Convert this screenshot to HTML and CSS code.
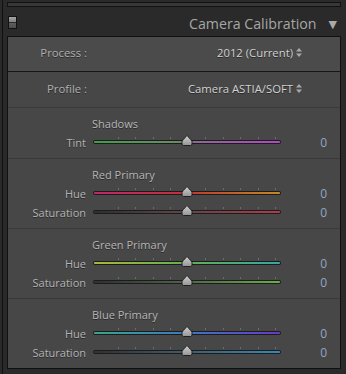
FILE: index.html
```html
<!DOCTYPE html>
<html lang="en">
<head>
<meta charset="UTF-8" />
<meta name="viewport" content="width=device-width, initial-scale=1" />
<title>Camera Calibration</title>
<link rel="stylesheet" href="styles.css">
</head>
<body>
<div class="wrap">
  <div class="strip"></div>

  <div class="panel-head">
    <span class="switch"></span>
    <span class="title">Camera Calibration</span>
    <span class="arrow">&#9660;</span>
  </div>

  <div class="panel">
    <div class="select-row process">
      <span class="label">Process :</span>
      <span class="select">2012 (Current)
        <svg class="updown" width="6" height="9" viewBox="0 0 6 9"><path d="M3 0 L6 3.5 L0 3.5 Z M0 5.5 L6 5.5 L3 9 Z" fill="#a9a9a9"/></svg>
      </span>
    </div>
    <div class="select-row profile">
      <span class="label">Profile :</span>
      <span class="select">Camera ASTIA/SOFT
        <svg class="updown" width="6" height="9" viewBox="0 0 6 9"><path d="M3 0 L6 3.5 L0 3.5 Z M0 5.5 L6 5.5 L3 9 Z" fill="#a9a9a9"/></svg>
      </span>
    </div>

    <div class="group">
      <div class="group-title">Shadows</div>
      <div class="slider-row">
        <span class="label">Tint</span>
        <div class="slider"><div class="ticks"></div><div class="track tint"></div><span class="thumb"></span></div>
        <span class="num">0</span>
      </div>
    </div>

    <div class="group">
      <div class="group-title">Red Primary</div>
      <div class="slider-row">
        <span class="label">Hue</span>
        <div class="slider"><div class="ticks"></div><div class="track red-hue"></div><span class="thumb"></span></div>
        <span class="num">0</span>
      </div>
      <div class="slider-row">
        <span class="label">Saturation</span>
        <div class="slider"><div class="ticks"></div><div class="track red-sat"></div><span class="thumb"></span></div>
        <span class="num">0</span>
      </div>
    </div>

    <div class="group">
      <div class="group-title">Green Primary</div>
      <div class="slider-row">
        <span class="label">Hue</span>
        <div class="slider"><div class="ticks"></div><div class="track green-hue"></div><span class="thumb"></span></div>
        <span class="num">0</span>
      </div>
      <div class="slider-row">
        <span class="label">Saturation</span>
        <div class="slider"><div class="ticks"></div><div class="track green-sat"></div><span class="thumb"></span></div>
        <span class="num">0</span>
      </div>
    </div>

    <div class="group last">
      <div class="group-title">Blue Primary</div>
      <div class="slider-row">
        <span class="label">Hue</span>
        <div class="slider"><div class="ticks"></div><div class="track blue-hue"></div><span class="thumb"></span></div>
        <span class="num">0</span>
      </div>
      <div class="slider-row">
        <span class="label">Saturation</span>
        <div class="slider"><div class="ticks"></div><div class="track blue-sat"></div><span class="thumb"></span></div>
        <span class="num">0</span>
      </div>
    </div>
  </div>
</div>
</body>
</html>
```

FILE: styles.css
```css
body {
  margin: 0;
  background: #2a2a2a;
  font-family: 'Open Sans', 'DejaVu Sans', sans-serif;
  color: #b4b4b4;
}
.wrap {
  margin-left: 2px;
  border-left: 1px solid #111;
  padding: 2px 5px 0 4px;
  height: 372px;
  overflow: hidden;
}
.strip {
  height: 3px;
  border: 1px solid #121212;
  background: #383838;
}
.panel-head {
  box-sizing: border-box;
  height: 29px;
  padding-top: 4px;
  display: flex;
  align-items: center;
  padding-left: 1px;
}
.switch {
  width: 7px;
  height: 11px;
  border: 1px solid #111;
  background: linear-gradient(#a5a5a5, #7c7c7c 50%, #2a2a2a 50%, #2a2a2a 58%, #5c5c5c 58%, #4c4c4c);
  margin-top: -2px;
}
.title {
  margin-left: auto;
  font-size: 14.2px;
  color: #a6a6a6;
}
.arrow {
  margin-left: 12px;
  margin-right: 4px;
  font-size: 11px;
  color: #aaa;
}
.panel {
  border: 1px solid #111;
  background: #474747;
}
.select-row {
  box-sizing: border-box;
  display: flex;
  align-items: center;
  height: 35px;
  font-size: 11.3px;
  text-shadow: 0 1px 0 #2a2a2a;
}
.select-row.process {
  background: #4b4b4b;
  border-bottom: 1px solid #161616;
  padding-bottom: 4px;
}
.select-row.profile {
  border-bottom: 1px solid #3a3a3a;
  height: 36px;
  padding-bottom: 3px;
}
.select-row .label {
  width: 79px;
  text-align: right;
  color: #b0b0b0;
}
.select {
  margin-left: auto;
  margin-right: 38px;
  color: #d2d2d2;
  display: flex;
  align-items: center;
  gap: 3px;
}
.group {
  padding: 6px 0;
  border-bottom: 1px solid #3a3a3a;
}
.group.last {
  border-bottom: none;
}
.group-title {
  height: 19px;
  line-height: 20px;
  padding-left: 84px;
  font-size: 11px;
  color: #b6b6b6;
  text-shadow: 0 1px 0 #2a2a2a;
}
.slider-row {
  display: flex;
  align-items: center;
  height: 19px;
  font-size: 11px;
}
.slider-row .label {
  width: 78px;
  text-align: right;
  color: #b4b4b4;
  text-shadow: 0 1px 0 #2a2a2a;
  margin-top: -1px;
}
.slider {
  position: relative;
  width: 188px;
  height: 19px;
  margin-left: 7px;
}
.ticks {
  position: absolute;
  left: 25px;
  top: 4px;
  width: 159px;
  height: 2px;
  background: repeating-linear-gradient(90deg, #6c6c6c 0 1px, transparent 1px 17.5px);
}
.track {
  position: absolute;
  left: 1px;
  right: 1px;
  top: 8px;
  height: 2px;
  border-radius: 2px;
  box-shadow: 0 0 0 1px #1c1c1c;
}
.tint { background: linear-gradient(90deg, #3f9f46, #6c8a6a 48%, #8a6a92 52%, #b545c8); }
.red-hue { background: linear-gradient(90deg, #c0276a, #c23040 45%, #c04030 55%, #c28a22); }
.red-sat { background: linear-gradient(90deg, #2f2f2f, #5c4547 45%, #b33a48); }
.green-hue { background: linear-gradient(90deg, #a9b83a, #62b050 50%, #34a8a6); }
.green-sat { background: linear-gradient(90deg, #303030, #4b5f48 45%, #68b046); }
.blue-hue { background: linear-gradient(90deg, #36a88c, #3c78c4 50%, #6a38c8); }
.blue-sat { background: linear-gradient(90deg, #303030, #405868 45%, #3788bb); }
.thumb {
  position: absolute;
  left: 88px;
  top: 2px;
  width: 12px;
  height: 11px;
  background: url("data:image/svg+xml,%3Csvg xmlns='http://www.w3.org/2000/svg' width='12' height='11' viewBox='0 0 12 11'%3E%3Cdefs%3E%3ClinearGradient id='g' x1='0' y1='0' x2='0' y2='1'%3E%3Cstop offset='0' stop-color='%23d0d0d0'/%3E%3Cstop offset='1' stop-color='%23949494'/%3E%3C/linearGradient%3E%3C/defs%3E%3Cpath d='M6 0.5 C7 2 10 4 11 6.5 L11 9 Q11 10.5 9.5 10.5 L2.5 10.5 Q1 10.5 1 9 L1 6.5 C2 4 5 2 6 0.5 Z' fill='url(%23g)' stroke='%23202020' stroke-width='1'/%3E%3C/svg%3E") no-repeat;
}
.num {
  width: 46px;
  text-align: right;
  font-size: 12px;
  color: #8fa6c4;
}
```
